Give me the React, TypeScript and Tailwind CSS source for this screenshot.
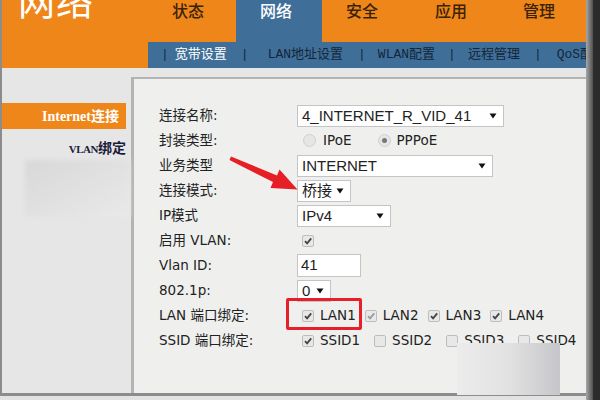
const CJK = '"Noto Sans CJK SC", sans-serif';

function Arrow() {
  return (
    <svg width="8" height="6" viewBox="0 0 8 6" className="shrink-0">
      <path d="M0.5 0.5 L7.5 0.5 L4 5.5 Z" fill="#111" />
    </svg>
  );
}

function Select({ w, value }: { w: number; value: string }) {
  return (
    <div
      className="h-[22px] bg-white border border-[#c4c4c4] flex items-center justify-between pl-[4px] pr-[6px] text-[15px] text-[#222]"
      style={{ width: w, fontFamily: '"Liberation Sans", "Noto Sans CJK SC", sans-serif' }}
    >
      <span className="leading-none">{value}</span>
      <Arrow />
    </div>
  );
}

function Check({ on, dim }: { on: boolean; dim?: boolean }) {
  return (
    <span className="w-[12px] h-[12px] border border-[#bdbdbd] bg-[#e8e8e8] rounded-[2px] flex items-center justify-center shrink-0">
      {on && (
        <svg width="10" height="10" viewBox="0 0 10 10">
          <path d="M2 5.2 L4.1 7.4 L8.2 2.4" stroke={dim ? '#9a9a9a' : '#444'} strokeWidth="1.8" fill="none" />
        </svg>
      )}
    </span>
  );
}

function Radio({ on }: { on: boolean }) {
  return (
    <span className="w-[13px] h-[13px] rounded-full border border-[#d0d0d0] bg-[#e6e6e6] flex items-center justify-center shrink-0">
      {on && <span className="w-[5px] h-[5px] rounded-full bg-[#777]" />}
    </span>
  );
}

const rows: { label: string; control: React.ReactNode }[] = [
  { label: '连接名称:', control: <Select w={207} value="4_INTERNET_R_VID_41" /> },
  {
    label: '封装类型:',
    control: (
      <div className="flex items-center pl-[6px]">
        <Radio on={false} />
        <span className="ml-[7px]">IPoE</span>
        <span className="ml-[27px]"><Radio on /></span>
        <span className="ml-[5px]">PPPoE</span>
      </div>
    ),
  },
  { label: '业务类型', control: <Select w={196} value="INTERNET" /> },
  { label: '连接模式:', control: <Select w={54} value="桥接" /> },
  { label: 'IP模式', control: <Select w={94} value="IPv4" /> },
  {
    label: '启用 VLAN:',
    control: (
      <div className="pl-[5px]">
        <Check on />
      </div>
    ),
  },
  {
    label: 'Vlan ID:',
    control: (
      <div
        className="w-[64px] h-[23px] bg-white border border-[#c4c4c4] pl-[3px] flex items-center text-[15px] text-[#222]"
        style={{ fontFamily: '"Liberation Sans", sans-serif' }}
      >
        41
      </div>
    ),
  },
  { label: '802.1p:', control: <Select w={34} value="0" /> },
  {
    label: 'LAN 端口绑定:',
    control: (
      <div className="flex items-center pl-[5px] gap-[9px]">
        {['LAN1', 'LAN2', 'LAN3', 'LAN4'].map((l, i) => (
          <div key={l} className="flex items-center gap-[6px]">
            <Check on dim={i === 1} />
            <span>{l}</span>
          </div>
        ))}
      </div>
    ),
  },
  {
    label: 'SSID 端口绑定:',
    control: (
      <div className="flex items-center pl-[5px] gap-[14px]">
        {['SSID1', 'SSID2', 'SSID3', 'SSID4'].map((l, i) => (
          <div key={l} className="flex items-center gap-[6px]">
            <Check on={i === 0} />
            <span>{l}</span>
          </div>
        ))}
      </div>
    ),
  },
];

export default function App() {
  return (
    <div className="w-[600px] h-[400px] flex overflow-hidden bg-[#2b2b2b] relative" style={{ fontFamily: CJK }}>
      <div className="w-[586px] h-[400px] flex flex-col bg-[#e2e2e2]">
        <div className="h-[396px] flex flex-col border-l-2 border-b-[3px] border-[#8c8c8c] overflow-hidden">
          {/* top nav */}
          <div className="h-[42px] bg-[#ef861a] flex items-start shrink-0">
            <div className="w-[170px] pl-[16px] overflow-hidden h-[42px]">
              <span className="block text-[37px] leading-none text-white -mt-[18px] tracking-[1px]">网络</span>
            </div>
            <div className="w-[64px] text-[16px] leading-[20px] text-[#3a2206] font-medium">状态</div>
            <div className="w-[86px] h-[42px] bg-[#3f6f98] pl-[24px] text-[16px] leading-[20px] text-white font-medium">网络</div>
            <div className="ml-[24px] text-[16px] leading-[20px] text-[#3a2206] font-medium">安全</div>
            <div className="ml-[57px] text-[16px] leading-[20px] text-[#3a2206] font-medium">应用</div>
            <div className="ml-[56px] text-[16px] leading-[20px] text-[#3a2206] font-medium">管理</div>
          </div>
          {/* sub nav */}
          <div className="h-[26px] flex shrink-0">
            <div className="w-[146px] bg-[#ef861a]" />
            <div
              className="flex-1 bg-[#3f6f98] flex items-center whitespace-nowrap overflow-hidden text-[13px] text-[#14263a]"
              style={{ fontFamily: '"Liberation Mono", "Noto Sans CJK SC", monospace' }}
            >
              <span className="ml-[13px]">|</span>
              <span className="ml-[6px] text-white">宽带设置</span>
              <span className="ml-[14px]">|</span>
              <span className="ml-[19px]">LAN地址设置</span>
              <span className="ml-[15px]">|</span>
              <span className="ml-[12px]">WLAN配置</span>
              <span className="ml-[13px]">|</span>
              <span className="ml-[12px]">远程管理</span>
              <span className="ml-[14px]">|</span>
              <span className="ml-[15px]">QoS配置</span>
            </div>
          </div>
          {/* body */}
          <div className="flex-1 flex bg-[#e6e6e6]">
            <div className="w-[129px] pt-[35px] shrink-0">
              <div
                className="w-[124px] h-[26px] bg-[#ef861a] flex items-center justify-end pr-[7px] text-white font-bold text-[14px]"
                style={{ fontFamily: '"Liberation Serif", "Noto Sans CJK SC", serif' }}
              >
                Internet连接
              </div>
              <div
                className="w-[124px] mt-[12px] text-right text-[14px] leading-[16px] font-bold text-[#1b1b3a]"
                style={{ fontFamily: '"Liberation Serif", "Noto Sans CJK SC", serif' }}
              >
                <span className="text-[11px] tracking-[-0.5px]">VLAN</span>绑定
              </div>
            </div>
            <div className="flex-1 mt-[9px] bg-[#eff0ee] border-l-[3px] border-t-2 border-[#b4b4b4] pl-[25px] pt-[24px]">
              <div className="text-[13.5px] text-[#222]" style={{ fontFamily: '"DejaVu Sans", "Noto Sans CJK SC", sans-serif' }}>
                {rows.map((r) => (
                  <div key={r.label} className="h-[25px] flex items-center">
                    <div className="w-[138px] shrink-0">{r.label}</div>
                    {r.control}
                  </div>
                ))}
              </div>
            </div>
          </div>
        </div>
      </div>
      <div className="w-[7px] h-[400px] bg-gradient-to-r from-[#a8a8a8] to-[#505050]" />
      <div className="flex-1" />

      {/* blurred patches */}
      <div className="absolute left-[25px] top-[160px] w-[105px] h-[57px] bg-gradient-to-br from-[#d8d8d8] to-[#e9e9e9] blur-[2px]" />
      <div className="absolute left-[457px] top-[343px] w-[103px] h-[52px] bg-gradient-to-r from-[#ececec] via-[#e2e2e2] to-[#c6c6ca]" />

      {/* red annotations */}
      <div className="absolute left-[286px] top-[298px] w-[76px] h-[32px] border-[3px] border-[#e5202a] rounded-[2px]" />
      <svg className="absolute left-0 top-0" width="600" height="400" viewBox="0 0 600 400">
        <path d="M231 156.5 L277 175.5 L279.5 169.5 L297.5 189.5 L270.5 188 L273 182 L229.5 160 Z" fill="#e61e25" />
      </svg>
    </div>
  );
}
